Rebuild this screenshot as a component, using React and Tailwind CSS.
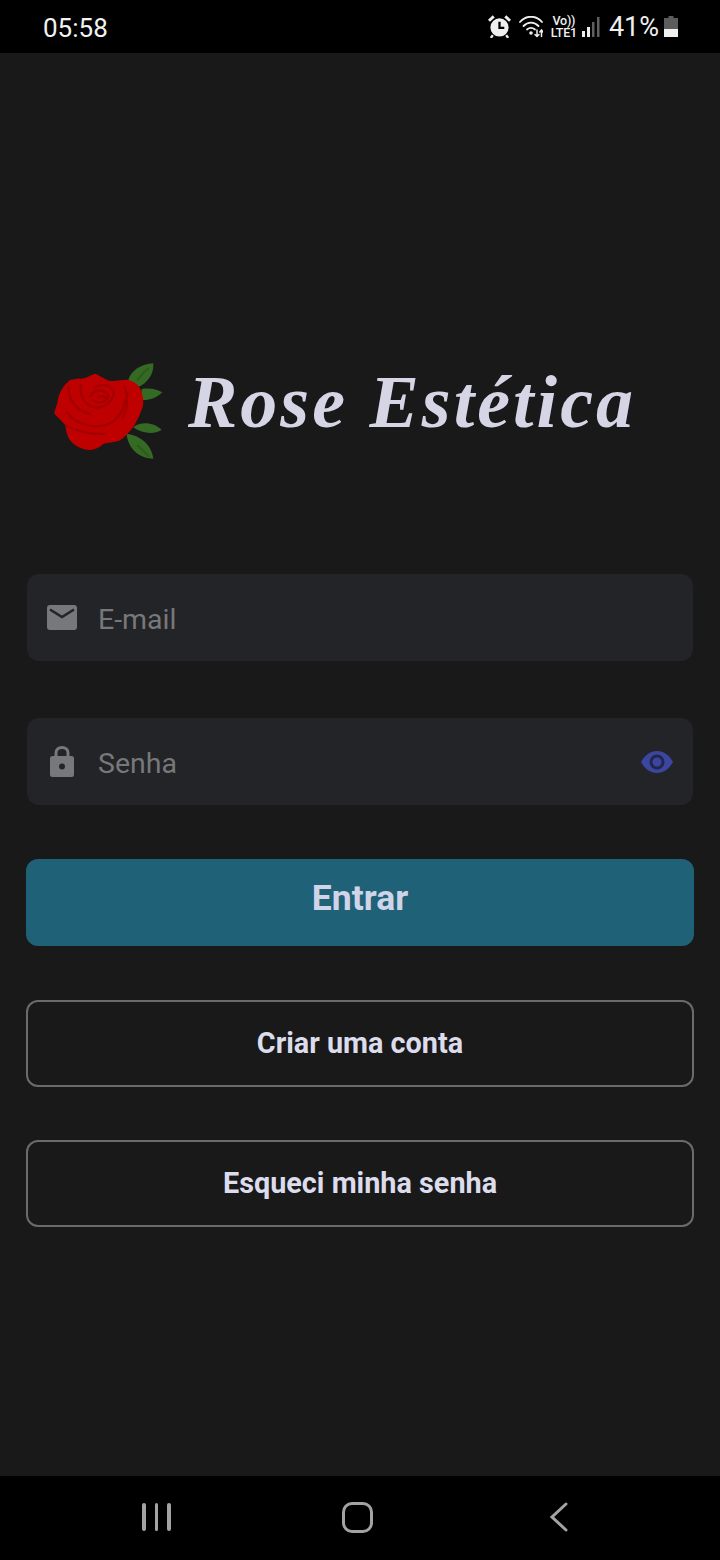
import React from "react";

const RoseLogo = () => (
  <svg width="140" height="120" viewBox="0 0 420 360" className="shrink-0">
    <path d="M265 90C272 62 305 42 340 40C343 70 322 100 297 110Z" fill="#356a24" />
    <path d="M292 90C302 76 315 64 326 54" stroke="#2d5c1e" strokeWidth="7" fill="none" />
    <path d="M305 117C330 113 350 118 367 127C350 145 325 152 303 150Z" fill="#356a24" />
    <path d="M280 232C300 215 340 215 365 240C340 255 305 250 280 232Z" fill="#356a24" />
    <path d="M260 252C300 255 335 285 340 326C300 325 265 300 260 252Z" fill="#356a24" />
    <path d="M292 285C305 298 318 310 328 320" stroke="#2d5c1e" strokeWidth="7" fill="none" />
    <path
      d="M42 190C46 175 52 165 54 148C58 125 72 105 90 90C105 85 120 88 135 84C148 80 155 72 168 72C185 80 198 92 215 93C232 94 250 88 265 90C282 95 298 105 303 122C310 140 312 155 308 172C300 195 292 210 282 228C268 245 255 262 238 272C220 278 205 276 190 282C175 295 160 301 145 300C122 298 100 285 88 268C80 255 78 240 76 226C65 212 52 202 42 190Z"
      fill="#bf0000"
    />
    <g stroke="#a50000" strokeWidth="7" fill="none" strokeLinecap="round">
      <path d="M78 226C110 244 160 256 195 250" />
      <path d="M82 188C105 218 145 236 195 226C228 216 248 190 256 150" />
      <path d="M86 112C85 150 110 182 150 192" />
      <path d="M122 105C120 135 128 158 155 170C185 180 215 160 222 130C216 108 190 96 165 112" />
      <path d="M150 140C158 118 195 116 205 136C205 155 175 164 160 150" />
      <path d="M174 142C184 136 194 138 199 144" />
      <path d="M252 108C266 135 264 170 248 205" />
    </g>
  </svg>
);

const Field = ({ icon, label, right }) => (
  <div className="mx-px h-[87px] rounded-xl bg-[#222427] flex items-center pl-[20px] pr-[20px]">
    <div className="w-[30px] h-[32px] flex items-center justify-center shrink-0">{icon}</div>
    <span className="ml-[21px] pt-[5px] text-[28.5px] text-[#77787a] flex-1">{label}</span>
    {right}
  </div>
);

const OutlineButton = ({ label }) => (
  <div className="h-[87px] rounded-xl border-2 border-[#6a6b6d] flex items-center justify-center text-[28.8px] font-bold text-[#dcdcec]">
    {label}
  </div>
);

export default function App() {
  return (
    <div className="w-[720px] h-[1560px] flex flex-col bg-[#191919] font-['Roboto',sans-serif]">
      {/* status bar */}
      <div className="h-[53px] bg-black flex items-center pl-[43px] pr-[42px] text-[#f2f2f2] shrink-0">
        <span className="text-[26px] leading-none flex-1 pt-[2px]">05:58</span>
        <svg width="23" height="23" viewBox="0 0 24 24" className="mr-[8px]">
          <circle cx="12" cy="13" r="9.500" fill="#efefef" />
          <path d="M12 7V13.500H17" stroke="#000" strokeWidth="2.400" fill="none" />
          <path d="M1 6L6 1.500M23 6L18 1.500" stroke="#efefef" strokeWidth="3" />
          <path d="M5 21L3 24M19 21L21 24" stroke="#efefef" strokeWidth="2.400" />
        </svg>
        <svg width="24" height="22" viewBox="0 0 24 22" className="mr-[8px]">
          <g stroke="#efefef" strokeWidth="1.800" fill="none" strokeLinecap="round">
            <path d="M1 6C7 -1 17 -1 23 6" />
            <path d="M4.500 10C9 5.500 15 5.500 19.500 10" />
            <path d="M8 13.500C10.500 11.500 13.500 11.500 16 13.500" />
            <path d="M18 14V20.500M16 18.500L18 20.500L20 18.500" strokeWidth="1.500" />
            <path d="M22.500 20.500V14M20.800 16L22.500 14L24 16" strokeWidth="1.500" />
          </g>
          <circle cx="12" cy="17" r="1.800" fill="#efefef" />
        </svg>
        <div className="w-[26px] flex flex-col items-center text-[#efefef] text-[12.5px] font-medium leading-[12px] tracking-[-0.2px] pt-[1px]">
          <span>Vo))</span>
          <span>LTE1</span>
        </div>
        <svg width="18" height="21" viewBox="0 0 18 21" className="ml-[5px] mr-[9px]">
          <rect x="0" y="15" width="3" height="6" fill="#efefef" />
          <rect x="5" y="11" width="3" height="10" fill="#efefef" />
          <rect x="10" y="6" width="2.500" height="15" fill="#5f5f5f" />
          <rect x="15" y="1" width="2.500" height="20" fill="#5f5f5f" />
        </svg>
        <span className="text-[27px] leading-none text-[#efefef] pt-[1px]">41%</span>
        <svg width="14" height="21" viewBox="0 0 14 21" className="ml-[5px]">
          <path d="M4.500 0H9.500V2H14V13H0V2H4.500Z" fill="#5c5c5c" />
          <rect x="0" y="13" width="14" height="8" fill="#f0f0f0" />
        </svg>
      </div>

      {/* login content */}
      <div className="flex-1 px-[26px] pt-[297px]">
        <div className="flex items-start ml-[14px]">
          <RoseLogo />
          <span className="ml-[8px] mt-[8px] font-['Liberation_Serif',serif] italic font-bold text-[74px] leading-[88px] tracking-[3px] whitespace-nowrap text-[#d5d5e6]">
            Rose Estética
          </span>
        </div>

        <div className="mt-[104px] flex flex-col">
          <Field
            label="E-mail"
            icon={
              <svg width="30" height="25" viewBox="0 0 30 25">
                <path d="M3 0H27C29 0 30 1 30 3V22C30 24 29 25 27 25H3C1 25 0 24 0 22V3C0 1 1 0 3 0Z" fill="#77787a" />
                <path d="M3 4.500L15 12L27 4.500" stroke="#222427" strokeWidth="2.600" fill="none" />
              </svg>
            }
          />
          <div className="h-[57px]" />
          <Field
            label="Senha"
            icon={
              <svg width="24" height="31" viewBox="0 0 24 31">
                <path d="M6 11V7C6 3.500 8.500 1.500 12 1.500C15.500 1.500 18 3.500 18 7V11" stroke="#77787a" strokeWidth="3" fill="none" />
                <rect x="0" y="10" width="24" height="21" rx="2.500" fill="#77787a" />
                <circle cx="12" cy="20.500" r="3" fill="#222427" />
              </svg>
            }
            right={
              <svg width="32" height="22" viewBox="0 0 32 22">
                <path d="M0 11C4 4 9 0 16 0C23 0 28 4 32 11C28 18 23 22 16 22C9 22 4 18 0 11Z" fill="#3b46a0" />
                <circle cx="16" cy="11" r="7.500" fill="#232649" />
                <circle cx="16" cy="11" r="4.500" fill="#3b46a0" />
              </svg>
            }
          />
        </div>

        <div className="mt-[54px] h-[87px] pb-[7px] rounded-xl bg-[#1f6176] flex items-center justify-center text-[35.5px] font-bold text-[#d0d4e8]">
          Entrar
        </div>
        <div className="mt-[54px]">
          <OutlineButton label="Criar uma conta" />
        </div>
        <div className="mt-[53px]">
          <OutlineButton label="Esqueci minha senha" />
        </div>
      </div>

      {/* nav bar */}
      <div className="h-[84px] bg-black flex items-center pl-[142px] shrink-0">
        <div className="flex gap-[9px] -mt-[2px]">
          <div className="w-[3.500px] h-[28px] rounded-full bg-[#a3a3a3]" />
          <div className="w-[3.500px] h-[28px] rounded-full bg-[#a3a3a3]" />
          <div className="w-[3.500px] h-[28px] rounded-full bg-[#a3a3a3]" />
        </div>
        <div className="ml-[171px] w-[31px] h-[31px] rounded-[10px] border-[3.500px] border-[#a3a3a3] -mt-[2px]" />
        <svg width="20" height="30" viewBox="0 0 20 30" className="ml-[175px] -mt-[2px]">
          <path d="M18 2L4 15L18 28" stroke="#a3a3a3" strokeWidth="3" fill="none" strokeLinecap="round" />
        </svg>
      </div>
    </div>
  );
}
